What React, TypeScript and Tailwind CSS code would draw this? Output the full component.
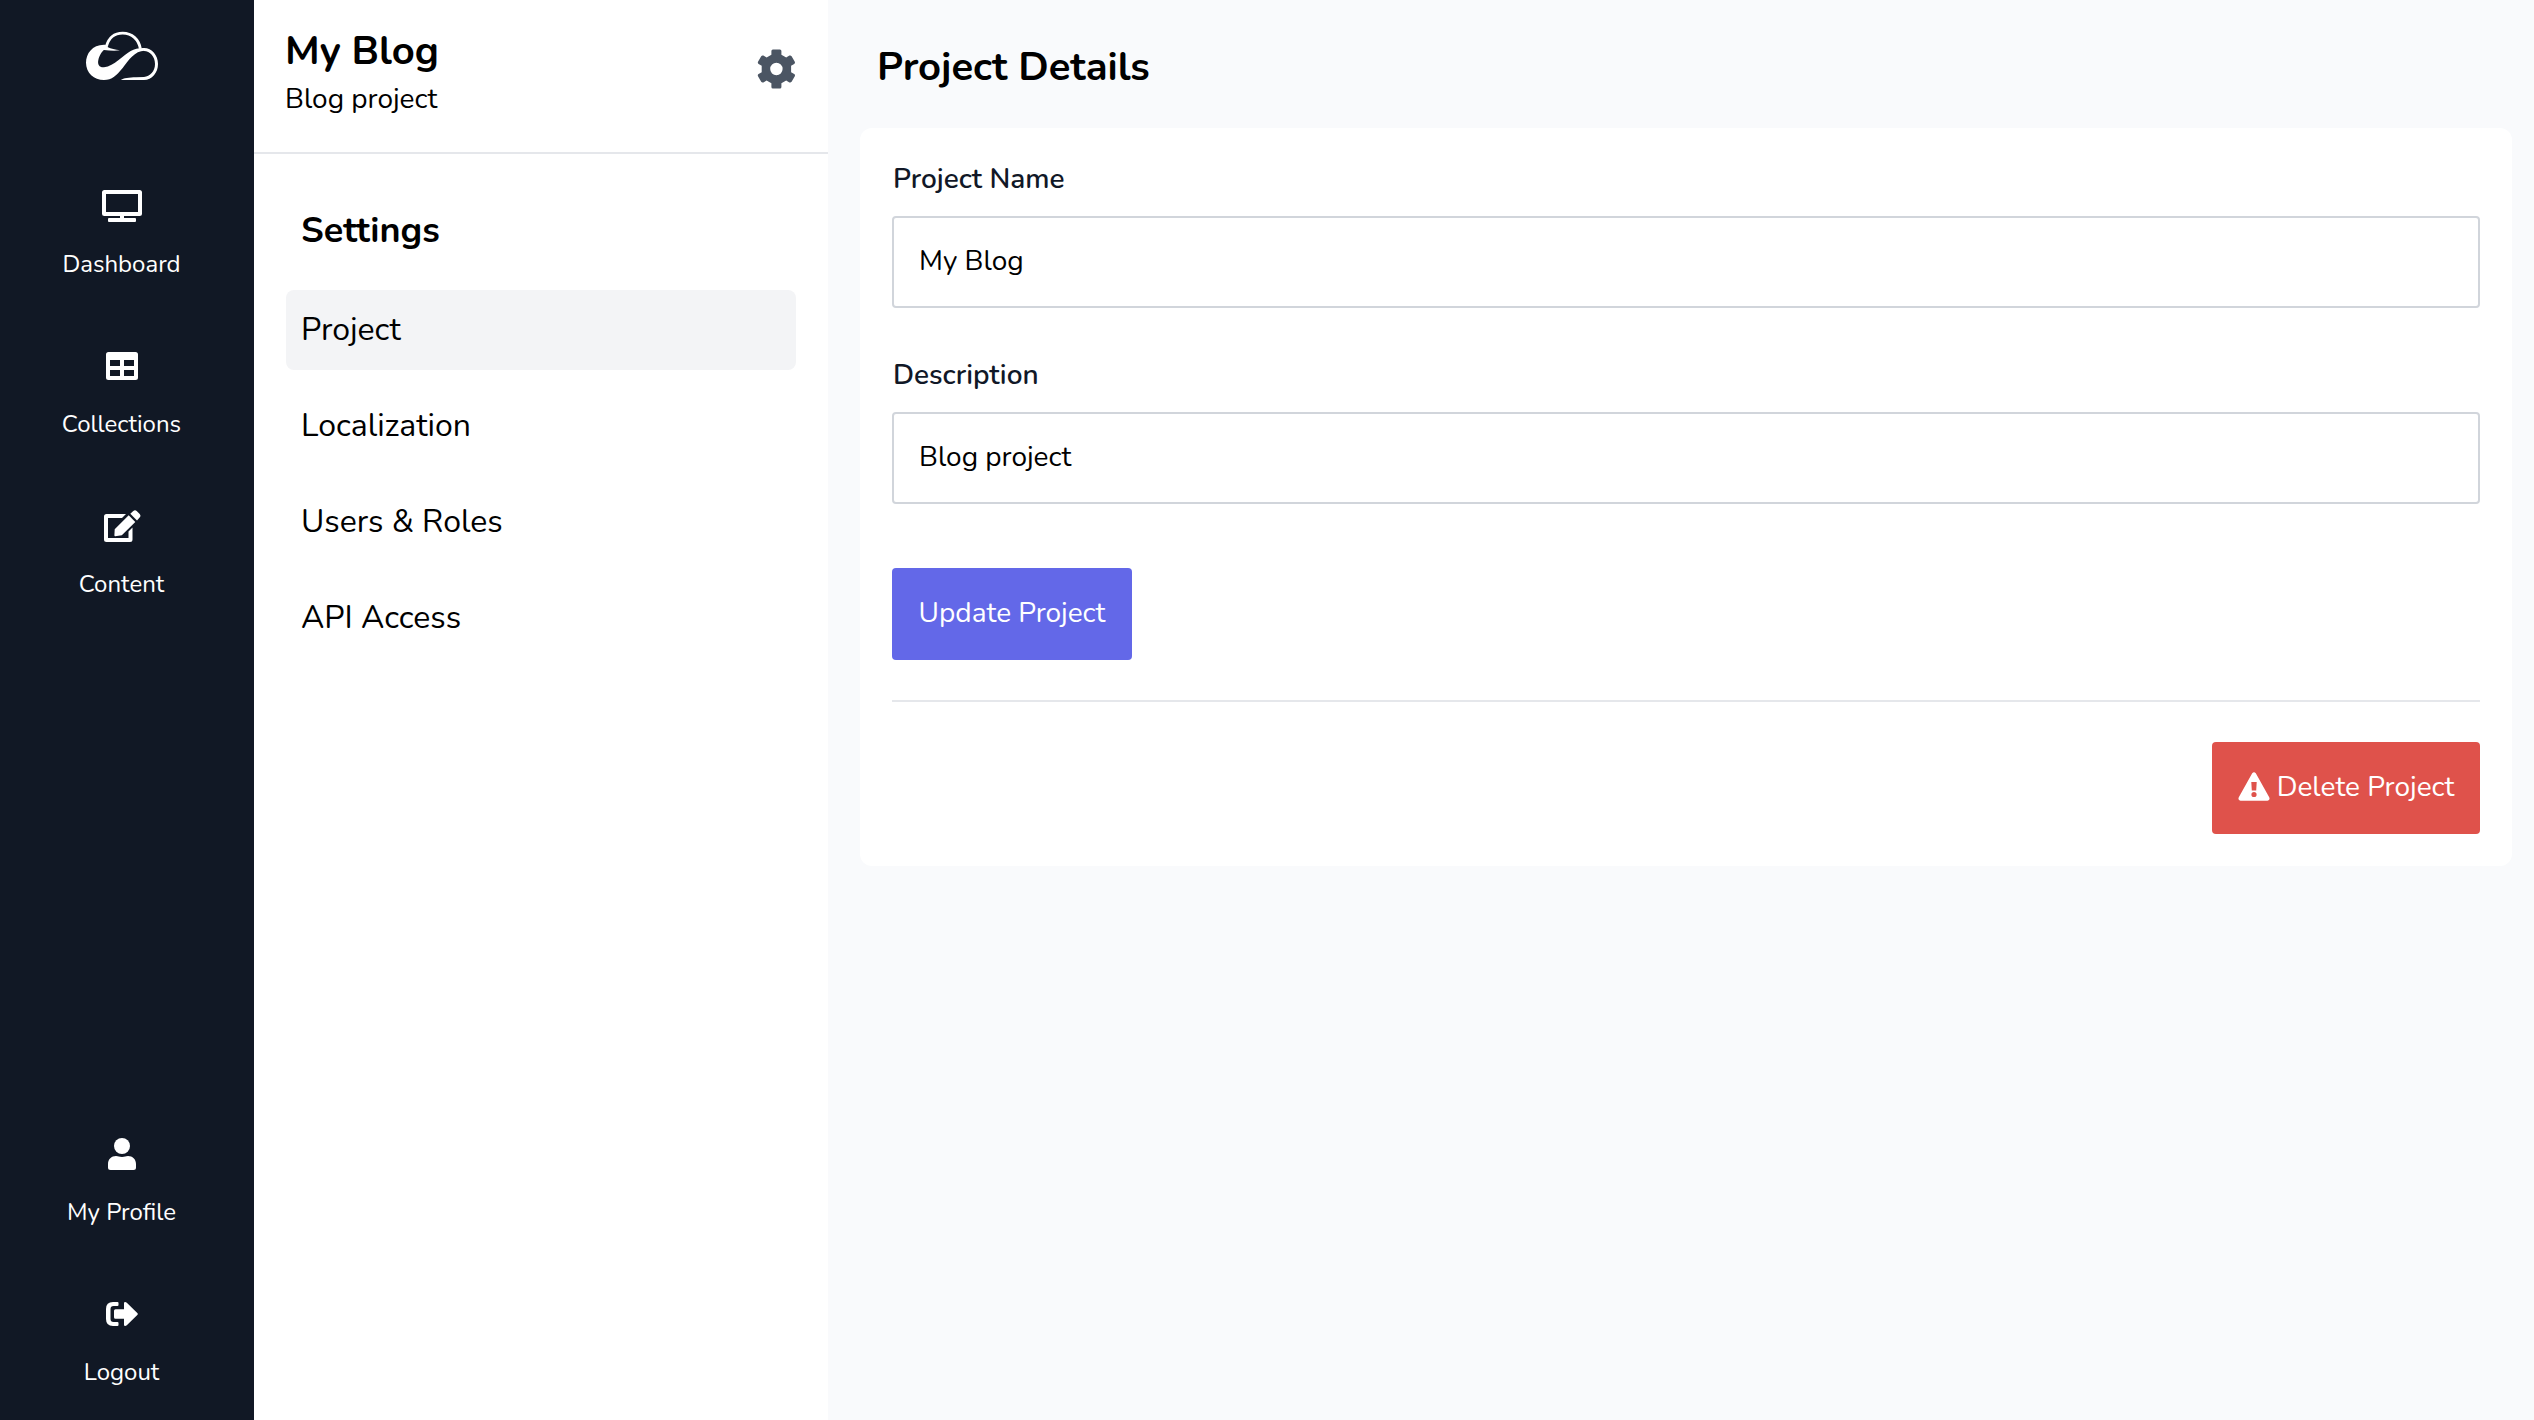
import type { ReactNode } from "react";

function Logo() {
  return (
    <svg viewBox="0 0 282 204" className="ml-0.5 h-[68px] w-[94px]" fill="#fff">
      <path d="M88 68C50 66 30 94 30 122C30 152 54 174 84 174C108 174 122 160 140 138C158 114 176 86 206 86L206 78C190 77 176 81 164 87C140 100 116 132 84 136C70 137 64 128 67 114C70 100 78 88 84 84C100 86 118 87 132 85C118 83 104 80 96 76Z" />
      <path d="M91 74C98 48 116 33.5 140 33.5C168 33.5 188 52 193 80" fill="none" stroke="#fff" strokeWidth="8.5" />
      <path d="M204 78C228 78 246 100 246 126C246 152 228 174 204 174L134 174C142 168 160 166 180 165.5L204 165C222 163 237 148 237 126C237 104 222 87 204 87Z" />
    </svg>
  );
}

function DesktopIcon() {
  return (
    <svg viewBox="0 0 40 32" className="h-8 w-10" fill="currentColor">
      <path fillRule="evenodd" d="M2.5 0H37.500A2.500 2.500 0 0 1 40 2.500V23.500A2.500 2.500 0 0 1 37.500 26H2.500A2.500 2.500 0 0 1 0 23.500V2.500A2.500 2.500 0 0 1 2.500 0ZM4 4V22H36V4Z" />
      <rect x="18" y="25" width="4" height="4" />
      <rect x="6" y="28" width="28" height="4" rx="1" />
    </svg>
  );
}

function TableIcon() {
  return (
    <svg viewBox="0 0 32 28" className="h-7 w-8" fill="currentColor">
      <path fillRule="evenodd" d="M2.500 0H29.500A2.500 2.500 0 0 1 32 2.500V25.500A2.500 2.500 0 0 1 29.500 28H2.500A2.500 2.500 0 0 1 0 25.500V2.500A2.500 2.500 0 0 1 2.500 0ZM4 8V14H14V8ZM18 8V14H28V8ZM4 18V24H14V18ZM18 18V24H28V18Z" />
    </svg>
  );
}

function EditIcon() {
  return (
    <svg viewBox="0 0 37 32" className="h-8 w-[37px]" fill="currentColor">
      <path d="M2.500 4H22L18 8H4V28H24.500V21.500L28.500 17.500V29.500A2.500 2.500 0 0 1 26 32H2.500A2.500 2.500 0 0 1 0 29.500V6.500A2.500 2.500 0 0 1 2.500 4Z" />
      <path d="M10.700 19.300L24.700 5.300L31.300 12L17.800 25.300L11.200 26.200Q10.300 26.200 10.400 25.300Z" />
      <path d="M26.300 3.800L29.300 0.900Q31 -0.600 32.700 0.900L35.700 3.900Q37.200 5.600 35.800 7.300L33 10.400Z" />
    </svg>
  );
}

function UserIcon() {
  return (
    <svg viewBox="0 0 28 32" className="h-8 w-7" fill="currentColor">
      <circle cx="14" cy="8" r="8" />
      <path d="M0 26C0 21 3.500 18 8 18C10.500 18 11 19 14 19S17.500 18 20 18C24.500 18 28 21 28 26V29.500Q28 32 25.500 32H2.500Q0 32 0 29.500Z" />
    </svg>
  );
}

function LogoutIcon() {
  return (
    <svg viewBox="0 0 32 24" className="h-6 w-8" fill="currentColor">
      <path d="M7 0H11.500Q12.500 0 12.500 1V3Q12.500 4 11.500 4H7.500Q4.500 4 4.500 7V17Q4.500 20 7.500 20H11.500Q12.500 20 12.500 21V23Q12.500 24 11.500 24H7Q0 24 0 17V7Q0 0 7 0Z" />
      <path d="M9.500 7.300H18V1Q18 0 19.200 0Q20 0 20.800 0.800L31.300 11Q32.300 12 31.300 13L20.800 23.200Q20 24 19.200 24Q18 24 18 23V16.700H9.500Q8 16.700 8 15.200V8.800Q8 7.300 9.500 7.300Z" />
    </svg>
  );
}

function GearIcon() {
  return (
    <svg viewBox="-20.400 -20 40 40" className="h-10 w-10 text-[#4b5563]" fill="currentColor">
      <path
        fillRule="evenodd"
        d="M-5 -18Q-5 -19.500 -3.500 -19.500H3.500Q5 -19.500 5 -18V-14.200L9.800 -11.400L13 -13.400Q14.300 -14 15.200 -12.800L18.400 -7.200Q19 -5.900 17.800 -5.100L14.700 -3.200V3.200L17.800 5.100Q19 5.900 18.400 7.200L15.200 12.800Q14.300 14 13 13.400L9.800 11.400L5 14.200V18Q5 19.500 3.500 19.500H-3.500Q-5 19.500 -5 18V14.200L-9.800 11.400L-13 13.400Q-14.300 14 -15.200 12.800L-18.400 7.200Q-19 5.900 -17.800 5.100L-14.700 3.200V-3.200L-17.800 -5.100Q-19 -5.900 -18.400 -7.200L-15.200 -12.800Q-14.300 -14 -13 -13.400L-9.800 -11.400L-5 -14.200ZM0 -6.200A6.200 6.200 0 1 0 0 6.200A6.200 6.200 0 1 0 0 -6.200Z"
      />
    </svg>
  );
}

function WarningIcon() {
  return (
    <svg viewBox="0 0 32 29" className="mb-0.5 h-[29px] w-8" fill="currentColor">
      <path
        fillRule="evenodd"
        d="M14.200 1.200Q16 -0.800 17.800 1.200L31.200 25.200Q32.400 28.300 29.500 28.700H2.500Q-0.400 28.300 0.800 25.200ZM13.300 10L13.800 18.600H18.200L18.700 10ZM16 19.900A2.600 2.600 0 1 0 16 25.100A2.600 2.600 0 1 0 16 19.900Z"
      />
    </svg>
  );
}

function NavItem({ icon, label }: { icon: ReactNode; label: string }) {
  return (
    <a className="flex flex-col items-center gap-6 text-white">
      <span className="flex h-8 items-center">{icon}</span>
      <span className="pr-px text-2xl leading-9">{label}</span>
    </a>
  );
}

function Field({ label, value }: { label: string; value: string }) {
  return (
    <label className="flex flex-col gap-4">
      <span className="pl-px text-[28px] leading-[42px] font-semibold text-[#111827]">{label}</span>
      <input
        className="h-[92px] w-full rounded-[4px] border-2 border-[#d1d5db] bg-white px-[25px] pb-0.5 text-[28px] outline-none"
        defaultValue={value}
      />
    </label>
  );
}

const settings = ["Project", "Localization", "Users & Roles", "API Access"];

export default function App() {
  return (
    <div className="flex h-[1420px] w-full overflow-hidden bg-[#f9fafc] font-[Nunito,Lato,sans-serif] text-black antialiased">
      <aside className="flex w-[254px] shrink-0 flex-col justify-between bg-[#111825] pt-[22px] pr-2.5 pb-[30px]">
        <div>
          <div className="flex justify-center">
            <Logo />
          </div>
          <nav className="mt-[100px] flex flex-col gap-[68px]">
            <NavItem icon={<DesktopIcon />} label="Dashboard" />
            <NavItem icon={<TableIcon />} label="Collections" />
            <NavItem icon={<EditIcon />} label="Content" />
          </nav>
        </div>
        <nav className="flex flex-col gap-[68px]">
          <NavItem icon={<UserIcon />} label="My Profile" />
          <NavItem icon={<LogoutIcon />} label="Logout" />
        </nav>
      </aside>

      <section className="w-[574px] shrink-0 bg-white">
        <header className="flex h-[154px] items-start justify-between border-b-2 border-[#e5e7eb] pr-8 pl-[31px]">
          <div className="pt-[23px]">
            <h1 className="text-[40px] leading-[56px] font-bold">My Blog</h1>
            <p className="text-[28px] leading-10">Blog project</p>
          </div>
          <span className="mt-[49px]">
            <GearIcon />
          </span>
        </header>
        <div className="px-8 pt-[49px]">
          <h2 className="px-[15px] text-[36px] leading-[56px] font-bold">Settings</h2>
          <ul className="mt-[31px] flex flex-col gap-4">
            {settings.map((name, i) => (
              <li
                key={name}
                className={
                  i === 0
                    ? "flex h-20 items-center rounded-lg bg-[#f3f4f6] px-[15px] text-[32px] leading-[48px]"
                    : "flex h-20 items-center rounded-lg px-[15px] text-[32px] leading-[48px]"
                }
              >
                {name}
              </li>
            ))}
          </ul>
        </div>
      </section>

      <main className="min-w-0 flex-1 pr-[22px] pl-8">
        <h2 className="flex h-32 items-center pt-1.5 pl-[17px] text-[40px] leading-[56px] font-bold">Project Details</h2>
        <div className="flex h-[738px] flex-col rounded-xl bg-white px-8 pt-[30px]">
          <div className="flex flex-col gap-[46px]">
            <Field label="Project Name" value="My Blog" />
            <Field label="Description" value="Blog project" />
          </div>
          <button className="mt-16 flex h-[92px] w-[240px] items-center justify-center rounded-[4px] bg-[#6368e8] pb-0.5 text-[28px] text-white">
            Update Project
          </button>
          <hr className="mt-10 border-t-2 border-[#e5e7eb]" />
          <button className="mt-10 flex h-[92px] w-[268px] items-center justify-center gap-[7px] self-end rounded-[4px] bg-[#df524b] pb-0.5 text-[28px] text-white">
            <WarningIcon />
            Delete Project
          </button>
        </div>
      </main>
    </div>
  );
}
